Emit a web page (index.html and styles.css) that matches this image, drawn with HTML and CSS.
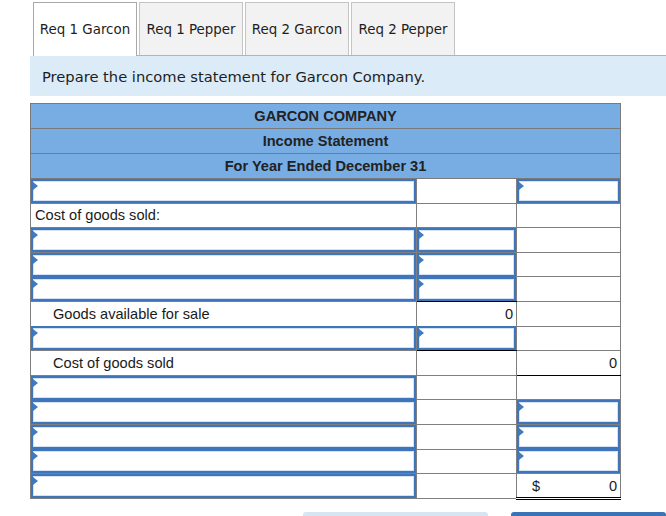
FILE: index.html
```html
<!DOCTYPE html>
<html>
<head>
<meta charset="utf-8">
<link rel="stylesheet" href="styles.css">
</head>
<body>
<div class="page">
  <div class="tabs">
    <div class="tab active">Req 1 Garcon</div>
    <div class="tab">Req 1 Pepper</div>
    <div class="tab">Req 2 Garcon</div>
    <div class="tab">Req 2 Pepper</div>
  </div>
  <div class="prompt">Prepare the income statement for Garcon Company.</div>
  <table class="stmt">
    <colgroup><col class="c1"><col class="c2"><col class="c3"></colgroup>
    <thead>
      <tr><th colspan="3">GARCON COMPANY</th></tr>
      <tr><th colspan="3">Income Statement</th></tr>
      <tr><th colspan="3">For Year Ended December 31</th></tr>
    </thead>
    <tbody>
      <tr><td class="in"><div class="inp"></div></td><td></td><td class="in"><div class="inp"></div></td></tr>
      <tr><td class="lbl">Cost of goods sold:</td><td></td><td></td></tr>
      <tr><td class="in"><div class="inp"></div></td><td class="in"><div class="inp"></div></td><td></td></tr>
      <tr><td class="in"><div class="inp"></div></td><td class="in"><div class="inp"></div></td><td></td></tr>
      <tr><td class="in"><div class="inp"></div></td><td class="in line"><div class="inp"></div></td><td></td></tr>
      <tr><td class="lbl indent">Goods available for sale</td><td class="num">0</td><td></td></tr>
      <tr><td class="in"><div class="inp"></div></td><td class="in line"><div class="inp"></div></td><td></td></tr>
      <tr><td class="lbl indent">Cost of goods sold</td><td></td><td class="num line">0</td></tr>
      <tr><td class="in"><div class="inp"></div></td><td></td><td></td></tr>
      <tr><td class="in"><div class="inp"></div></td><td></td><td class="in"><div class="inp"></div></td></tr>
      <tr><td class="in"><div class="inp"></div></td><td></td><td class="in"><div class="inp"></div></td></tr>
      <tr><td class="in"><div class="inp"></div></td><td></td><td class="in"><div class="inp"></div></td></tr>
      <tr><td class="in"><div class="inp"></div></td><td></td><td class="num total"><span class="dollar">$</span><span>0</span></td></tr>
    </tbody>
  </table>
  <div class="buttons">
    <div class="btn prev"></div>
    <div class="btn next"></div>
  </div>
</div>
</body>
</html>
```
FILE: styles.css
```css
html, body {
  margin: 0;
  padding: 0;
  background: #ffffff;
}
.page {
  width: 666px;
  padding-top: 2px;
}
.tabs {
  display: flex;
  gap: 2px;
  margin-left: 33px;
  height: 53px;
  border-bottom: 1px solid #b4b4b4;
}
.tab {
  width: 104px;
  box-sizing: border-box;
  height: 53px;
  border: 1px solid #c4c4c4;
  border-bottom: none;
  background: #f2f2f2;
  font-family: "DejaVu Sans", Verdana, sans-serif;
  font-size: 13.4px;
  color: #1e1e1e;
  display: flex;
  align-items: center;
  justify-content: center;
}
.tab.active {
  background: #ffffff;
  border-color: #a8a8a8;
  height: 54px;
  margin-bottom: -1px;
}
.prompt {
  margin-left: 30px;
  height: 40px;
  background: #dcebf8;
  font-family: "DejaVu Sans", Verdana, sans-serif;
  font-size: 14.7px;
  color: #1e1e1e;
  padding-left: 12px;
  display: flex;
  align-items: center;
  padding-top: 1px;
  box-sizing: border-box;
}
.stmt {
  margin-left: 30px;
  margin-top: 7px;
  width: 590px;
  border-collapse: collapse;
  table-layout: fixed;
  font-family: "Liberation Sans", Arial, sans-serif;
  font-size: 14.6px;
  color: #1a1a1a;
}
.c1 { width: 386px; }
.c2 { width: 100px; }
.c3 { width: 104px; }
.stmt th {
  background: #78ade4;
  border: 1px solid #7a7a7a;
  height: 24px;
  padding: 0;
  font-weight: bold;
  font-size: 14.6px;
  color: #222;
  text-align: center;
}
.stmt tbody tr {
  height: 24.6px;
}
.stmt td {
  border: 1px solid #7f7f7f;
  padding: 0 4px;
  height: 23px;
  vertical-align: middle;
}
.stmt td.in {
  padding: 0;
}
.stmt td.lbl {
  padding-left: 4px;
}
.stmt td.lbl.indent {
  padding-left: 22px;
}
.stmt td.num {
  text-align: right;
  padding-right: 3px;
}
.stmt td.line {
  border-bottom: 1px solid #000;
}
.stmt td.total {
  border-top: 1px solid #000;
  border-bottom: 3px double #000;
}
.total {
  white-space: nowrap;
}
.total .dollar {
  float: left;
  padding-left: 11px;
}
.inp {
  position: relative;
  box-sizing: border-box;
  height: 24px;
  margin: -1px 0;
  border: 2px solid #3f76bb;
  box-shadow: inset 0 0 0 1px #d3e2f4;
  background: #ffffff;
}
.inp::before {
  content: "";
  position: absolute;
  left: 0;
  top: 1px;
  width: 0;
  height: 0;
  border-top: 4px solid transparent;
  border-bottom: 4px solid transparent;
  border-left: 5px solid #3f7ac4;
}
.buttons {
  display: flex;
  margin-top: 12px;
  padding-left: 303px;
  gap: 23px;
}
.btn {
  height: 30px;
  border-radius: 3px 3px 0 0;
}
.btn.prev {
  width: 185px;
  background: #d7e4f2;
}
.btn.next {
  width: 155px;
  background: #3a73b6;
}
```
